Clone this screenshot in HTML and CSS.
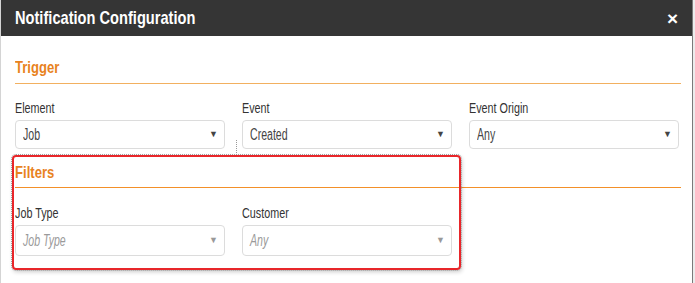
FILE: index.html
```html
<html>
<head>
  <meta charset="utf-8">
  <title>Notification Configuration</title>
  <link rel="stylesheet" href="styles.css">
</head>
<body>
  <div id="modal">
    <div class="modal-header">
      <h1 class="modal-title"><span class="narrow">Notification Configuration</span></h1>
      <span class="close">&times;</span>
    </div>

    <div class="modal-body">
      <section class="group">
        <h2 class="group-title trigger"><span class="narrow">Trigger</span></h2>
        <div class="fields">
          <div class="field">
            <label>Element</label>
            <div class="select"><span class="value">Job</span><span class="caret">&#9660;</span></div>
          </div>
          <div class="field">
            <label>Event</label>
            <div class="select"><span class="value">Created</span><span class="caret">&#9660;</span></div>
          </div>
          <div class="field">
            <label>Event Origin</label>
            <div class="select"><span class="value">Any</span><span class="caret">&#9660;</span></div>
          </div>
        </div>
      </section>

      <section class="group filters">
        <div class="highlight"></div>
        <span class="guide"></span>
        <h2 class="group-title"><span class="narrow">Filters</span></h2>
        <div class="fields">
          <div class="field">
            <label>Job Type</label>
            <div class="select tall empty"><span class="value">Job Type</span><span class="caret">&#9660;</span></div>
          </div>
          <div class="field">
            <label>Customer</label>
            <div class="select tall empty"><span class="value">Any</span><span class="caret">&#9660;</span></div>
          </div>
        </div>
      </section>
    </div>
  </div>
</body>
</html>
```

FILE: styles.css
```css
body {
  margin: 0;
  font-family: 'Liberation Sans', Arial, sans-serif;
  color: #333;
  background-color: #ececec;
}

/* the app uses a condensed face; squeeze the text to match */
.narrow,
.field label,
.select .value {
  display: inline-block;
  transform-origin: left center;
  transform: scaleX(0.77);
  white-space: nowrap;
}

#modal {
  width: 691px;
  height: 283px;
  background-color: #fff;
  border-left: 1px solid #d4d4d4;
  border-right: 1px solid #7a7a7a;
}

.modal-header {
  height: 36px;
  padding: 0 14px 0 14px;
  display: flex;
  align-items: center;
  justify-content: space-between;
  background-color: #353535;
  color: #fff;
}

.modal-title {
  margin: 0;
  font-size: 19px;
  font-weight: bold;
}

.close {
  font-size: 19px;
  font-weight: bold;
  line-height: 1;
}

.modal-body {
  padding: 0 11px 0 14px;
}

.group {
  position: relative;
}

.group-title {
  margin: 22px 0 0 0;
  padding-bottom: 5px;
  font-size: 17px;
  line-height: 20px;
  font-weight: bold;
  color: #e8821e;
  border-bottom: 1px solid #f2b060;
}

.filters .group-title {
  margin-top: 14px;
  padding-bottom: 4px;
  border-bottom-color: #f39029;
}

.fields {
  display: grid;
  grid-template-columns: 210px 210px 210px;
  column-gap: 17px;
  margin-top: 16px;
}

.filters .fields {
  margin-top: 17px;
}

.field label {
  font-size: 14px;
  line-height: 16px;
  color: #333;
}

.select {
  position: relative;
  height: 27px;
  margin-top: 4px;
  padding-left: 7px;
  font-size: 16px;
  line-height: 27px;
  color: #444;
  border: 1px solid #dcdcdc;
  border-radius: 4px;
}

.select .value {
  transform: scaleX(0.66);
}

.select.tall {
  height: 29px;
  line-height: 29px;
}

.select.empty {
  font-style: italic;
  color: #9a9a9a;
}

.caret {
  position: absolute;
  right: 6px;
  top: 0;
  font-size: 9px;
  font-style: normal;
  color: #444;
}

.empty .caret {
  color: #999;
}

/* red annotation box around the filters */
.highlight {
  position: absolute;
  left: -3px;
  top: -8px;
  width: 445px;
  height: 111px;
  border: 2px solid #e8262a;
  border-radius: 4px;
  outline: 1px dotted #a0a0a0;
  box-shadow: 1px 2px 4px rgba(0, 0, 0, 0.2);
  pointer-events: none;
}

.guide {
  position: absolute;
  left: 221px;
  top: -23px;
  height: 15px;
  border-left: 1px dotted #999;
}
```
